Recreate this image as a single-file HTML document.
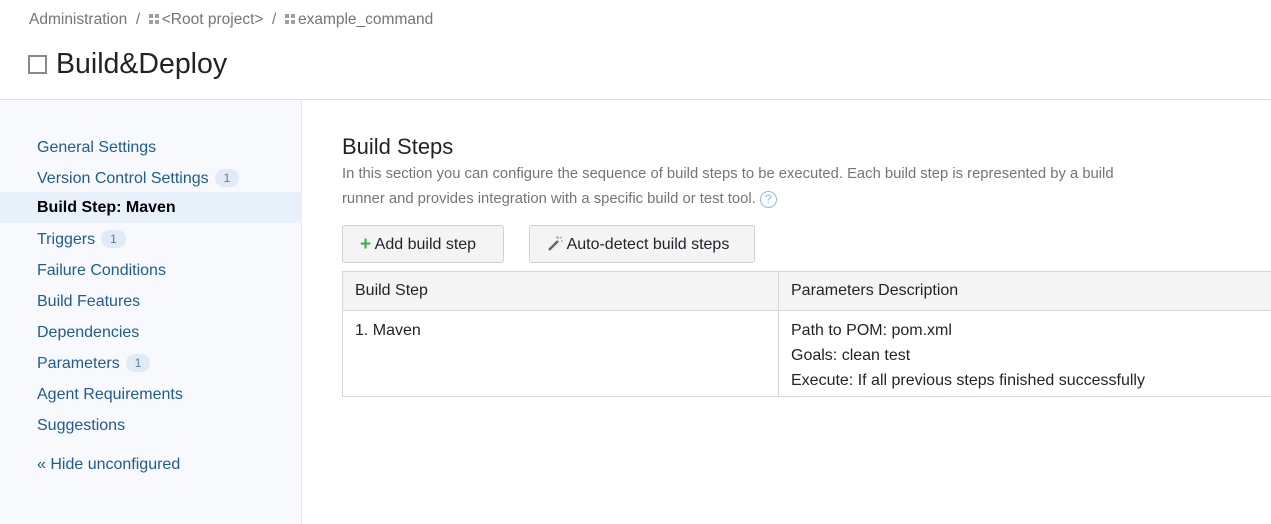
<!DOCTYPE html>
<html><head><style>
*{margin:0;padding:0;box-sizing:border-box}
body{width:1271px;height:524px;overflow:hidden;background:#fff;font-family:"Liberation Sans",sans-serif;color:#1f2328;position:relative}
.bc{position:absolute;left:29px;top:11px;font-size:15.5px;color:#737577}
.bc .g{display:inline-block;width:10px;height:10px;margin:0 3px 0 0;vertical-align:0px;
background:linear-gradient(#888,#888) 0 0/4px 4px no-repeat,linear-gradient(#888,#888) 6px 0/4px 4px no-repeat,linear-gradient(#888,#888) 0 6px/4px 4px no-repeat,linear-gradient(#888,#888) 6px 6px/4px 4px no-repeat;opacity:.8}
h1{position:absolute;left:28px;top:48px;font-size:28.5px;font-weight:normal;color:#1f2328}
h1 .cb{display:inline-block;width:19px;height:19px;border:2px solid #888;margin-right:9px;vertical-align:-1px}
.hr{position:absolute;left:0;right:0;top:99px;height:1px;background:#dfe1e5}
.side{position:absolute;left:0;top:100px;width:302px;height:424px;background:#f7f9fc;border-right:1px solid #e4e6ea}
.side div{position:absolute;left:37px;font-size:16px;color:#1f5b94;height:31px;line-height:31px}
.side .act{left:0;width:302px;padding-left:37px;background:#e6f1fc;color:#000;font-weight:bold;top:92px;line-height:32px}
.b{display:inline-block;background:#e1ebf7;color:#5f7a97;font-size:12px;border-radius:9px;padding:0 9px;line-height:18px;margin-left:6px;vertical-align:1px}
h2{position:absolute;left:342px;top:134px;font-size:22px;font-weight:normal}
.desc{position:absolute;left:342px;top:162px;width:820px;font-size:14.8px;color:#737577;line-height:25px}
.q{display:inline-block;width:17px;height:17px;border:1px solid #8fbbe6;border-radius:50%;color:#8fbbe6;font-size:12px;text-align:center;line-height:15px;vertical-align:0}
.btn{position:absolute;top:225px;height:38px;border:1px solid #cdd0d4;border-radius:3px;background:#f4f4f5;font-size:16px;line-height:38px;color:#1f2328}
table{position:absolute;left:342px;top:271px;width:940px;border-collapse:collapse;font-size:16px}
td,th{border:1px solid #d5d7da;text-align:left;font-weight:normal;padding:0 12px;vertical-align:top}
th{background:#f4f4f5;height:38px;line-height:38px}
td{height:86px;padding-top:7px;line-height:25px}
</style></head><body>
<div class="bc">Administration&nbsp; / &nbsp;<span class="g"></span>&lt;Root project&gt;&nbsp; / &nbsp;<span class="g"></span>example_command</div>
<h1><span class="cb"></span>Build&amp;Deploy</h1>
<div class="hr"></div>
<div class="side">
<div style="top:32px">General Settings</div>
<div style="top:63px">Version Control Settings<span class="b">1</span></div>
<div class="act">Build Step: Maven</div>
<div style="top:124px">Triggers<span class="b">1</span></div>
<div style="top:155px">Failure Conditions</div>
<div style="top:186px">Build Features</div>
<div style="top:217px">Dependencies</div>
<div style="top:248px">Parameters<span class="b">1</span></div>
<div style="top:279px">Agent Requirements</div>
<div style="top:310px">Suggestions</div>
<div style="top:349px">« Hide unconfigured</div>
</div>
<h2>Build Steps</h2>
<div class="desc">In this section you can configure the sequence of build steps to be executed. Each build step is represented by a build<br>runner and provides integration with a specific build or test tool. <span class="q">?</span></div>
<div class="btn" style="left:342px;width:162px;padding-left:17px"><span style="color:#3fae4d;font-weight:bold;font-size:19px;vertical-align:-1px">+</span> Add build step</div>
<div class="btn" style="left:529px;width:226px;padding-left:17px"><svg width="16" height="16" viewBox="0 0 16 16" style="vertical-align:-2px"><path d="M2 15L11 6" stroke="#666" stroke-width="2.5"/><path d="M11 1v3M13 3l2-1M14 6h2M9 2l1 1" stroke="#999" stroke-width="1"/></svg> Auto-detect build steps</div>
<table><tr><th style="width:436px">Build Step</th><th>Parameters Description</th></tr>
<tr><td>1. Maven</td><td>Path to POM: pom.xml<br>Goals: clean test<br>Execute: If all previous steps finished successfully</td></tr></table>
</body></html>
